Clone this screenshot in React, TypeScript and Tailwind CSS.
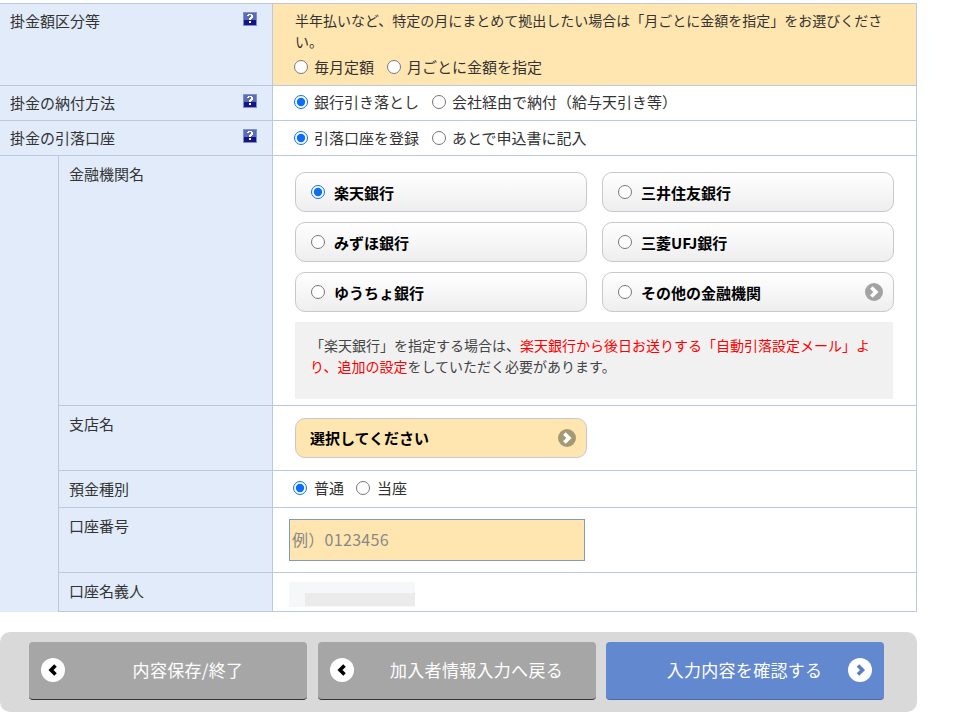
import { ReactNode } from "react"

function HelpIcon() {
  return (
    <svg width="14" height="14" viewBox="0 0 14 14" className="shrink-0" shapeRendering="crispEdges">
      <rect width="14" height="14" fill="#8090cc" />
      <rect x="1" y="1" width="12" height="7" fill="#5a6bb8" />
      <rect x="1" y="8" width="12" height="5" fill="#14148c" />
      <path d="M4 3h1V2h4v1h1v3H9v1H8v1H6V6h1V5h1V3H6v1H4z M6 9h2v2H6z" fill="#fff" />
    </svg>
  )
}

function ChevronCircle({ dir, size, bg, fg }: { dir: "left" | "right"; size: number; bg: string; fg: string }) {
  const small = size < 20
  const right = small ? "M8.5 6l6 6-6 6" : "M10 7.5l4.5 4.5-4.5 4.5"
  const left = "M14.5 7.5l-4.5 4.5 4.5 4.5"
  return (
    <svg width={size} height={size} viewBox="0 0 24 24" className="shrink-0">
      <circle cx="12" cy="12" r="12" fill={bg} />
      <path d={dir === "right" ? right : left} fill="none" stroke={fg} strokeWidth={small ? 5 : 3.6} />
    </svg>
  )
}

function Radio({ name, label, checked, gap }: { name: string; label: string; checked?: boolean; gap?: string }) {
  return (
    <label className="flex items-center">
      <input type="radio" name={name} defaultChecked={checked} className="m-0 w-[14px] h-[14px] accent-[#0b6ff2]" />
      <span className={gap || "ml-[6px]"}>{label}</span>
    </label>
  )
}

function Row({ label, help, sub, height, cellClass, children }: { label: string; help?: boolean; sub?: boolean; height: string; cellClass?: string; children: ReactNode }) {
  return (
    <div className={`flex border-b border-[#bcc8de] ${height}`}>
      <div className={`flex justify-between bg-[#e1ebfa] border-r border-[#bcc8de] ${sub ? "w-[214px] pl-[10px]" : "w-[273px] pl-[10px] pr-[15px]"}`}>
        <span className={sub ? "pt-[7px]" : "pt-[6px]"}>{label}</span>
        {help && (
          <span className="pt-[8px]">
            <HelpIcon />
          </span>
        )}
      </div>
      <div className={`flex-1 ${cellClass || ""}`}>{children}</div>
    </div>
  )
}

function BankButton({ label, checked, arrow }: { label: string; checked?: boolean; arrow?: boolean }) {
  return (
    <label className="flex items-center h-10 pl-[15px] pr-[10px] rounded-[10px] border border-[#c8c8ce] bg-gradient-to-b from-white to-[#eeeeee]">
      <input type="radio" name="bank" defaultChecked={checked} className="m-0 w-[14px] h-[14px] accent-[#0b6ff2]" />
      <span className="ml-[9px] pt-[2px] flex-1 font-bold text-black">{label}</span>
      {arrow && <ChevronCircle dir="right" size={18} bg="#a3a3a3" fg="#fff" />}
    </label>
  )
}

function FooterButton({ label, dir, primary }: { label: string; dir: "left" | "right"; primary?: boolean }) {
  return (
    <button
      type="button"
      className={`flex items-center w-[278px] h-[58px] pb-[2px] rounded-[4px] text-white text-[17px] tracking-[0.3px] ${
        primary ? "bg-[#6288d0] border-b border-[#4a6aa8] pl-[35px] pr-[12px]" : "bg-[#a6a6a6] border-b border-[#333] pl-[12px] pr-[12px]"
      }`}
    >
      {dir === "left" && <ChevronCircle dir="left" size={24} bg="#fff" fg="#000" />}
      <span className={`flex-1 text-center whitespace-nowrap ${dir === "left" ? "pl-[16px]" : ""}`}>{label}</span>
      {dir === "right" && <ChevronCircle dir="right" size={24} bg="#fff" fg="#5a7ec5" />}
    </button>
  )
}

export default function App() {
  return (
    <div lang="ja" className="w-[964px] h-[720px] overflow-hidden bg-white pt-[3px] text-[15px] leading-[22px] text-[#333] font-['Noto_Sans_CJK_JP','Liberation_Sans',sans-serif]">
      <div className="w-[917px] border-t border-r border-[#bcc8de]">
        <Row label="掛金額区分等" help height="h-[82px]" cellClass="bg-[#ffe6b0] pl-[21px] pr-[30px] pt-[6px]">
          <p className="text-[14px] leading-[21px] pl-px">半年払いなど、特定の月にまとめて拠出したい場合は「月ごとに金額を指定」をお選びください。</p>
          <div className="flex gap-[13px] mt-[4px]">
            <Radio name="amount" label="毎月定額" />
            <Radio name="amount" label="月ごとに金額を指定" />
          </div>
        </Row>
        <Row label="掛金の納付方法" help height="h-[35px]" cellClass="flex items-center gap-[13px] pl-[21px] pb-[2px]">
          <Radio name="pay" label="銀行引き落とし" checked />
          <Radio name="pay" label="会社経由で納付（給与天引き等）" />
        </Row>
        <Row label="掛金の引落口座" help height="h-[35px]" cellClass="flex items-center gap-[13px] pl-[21px]">
          <Radio name="account" label="引落口座を登録" checked />
          <Radio name="account" label="あとで申込書に記入" />
        </Row>
        <div className="flex">
          <div className="w-[59px] bg-[#e1ebfa] border-r border-[#bcc8de]" />
          <div className="flex-1">
            <Row label="金融機関名" sub height="h-[250px]" cellClass="pl-[22px] pr-[22px] pt-[16px]">
              <div className="grid grid-cols-2 gap-x-[15px] gap-y-[10px] w-[599px]">
                <BankButton label="楽天銀行" checked />
                <BankButton label="三井住友銀行" />
                <BankButton label="みずほ銀行" />
                <BankButton label="三菱UFJ銀行" />
                <BankButton label="ゆうちょ銀行" />
                <BankButton label="その他の金融機関" arrow />
              </div>
              <div className="mt-[10px] w-[598px] h-[77px] bg-[#f1f1f1] pl-[15px] pr-[5px] pt-[13px] text-[14px] leading-[21px] text-[#444]">
                「楽天銀行」を指定する場合は、
                <span className="text-[#ff0000]">楽天銀行から後日お送りする「自動引落設定メール」より、追加の設定</span>
                をしていただく必要があります。
              </div>
            </Row>
            <Row label="支店名" sub height="h-[65px]" cellClass="pl-[22px] pt-[12px]">
              <div className="flex items-center justify-between w-[292px] h-10 pl-[14px] pr-[10px] rounded-[10px] border border-[#c8c8ce] bg-[#ffe6b0]">
                <span className="font-bold text-black">選択してください</span>
                <ChevronCircle dir="right" size={18} bg="#a39a75" fg="#fff" />
              </div>
            </Row>
            <Row label="預金種別" sub height="h-[37px]" cellClass="flex items-center gap-[12px] pl-[20px] pb-[2px]">
              <Radio name="kind" label="普通" checked gap="ml-[7px]" />
              <Radio name="kind" label="当座" gap="ml-[7px]" />
            </Row>
            <Row label="口座番号" sub height="h-[65px]" cellClass="pl-[16px] pt-[11px]">
              <input
                type="text"
                placeholder="例）0123456"
                className="w-[296px] h-[42px] px-[2px] pb-[3px] bg-[#ffe6b0] border border-[#7f9cc0] text-[16px] tracking-[0.3px] placeholder:text-[#888]"
              />
            </Row>
            <Row label="口座名義人" sub height="h-[39px]" cellClass="pl-[16px] pt-[9px]">
              <div className="w-[126px] h-[25px] bg-[#f6f7f9] blur-[0.5px] pt-[11px] pl-[16px]">
                <div className="h-[13px] bg-[#ebebeb]" />
              </div>
            </Row>
          </div>
        </div>
      </div>
      <div className="flex gap-[10.5px] w-[917px] h-[80px] mt-[20px] pl-[29px] pt-[10px] rounded-[10px] bg-[#d9d9d9]">
        <FooterButton label="内容保存/終了" dir="left" />
        <FooterButton label="加入者情報入力へ戻る" dir="left" />
        <FooterButton label="入力内容を確認する" dir="right" primary />
      </div>
    </div>
  )
}
